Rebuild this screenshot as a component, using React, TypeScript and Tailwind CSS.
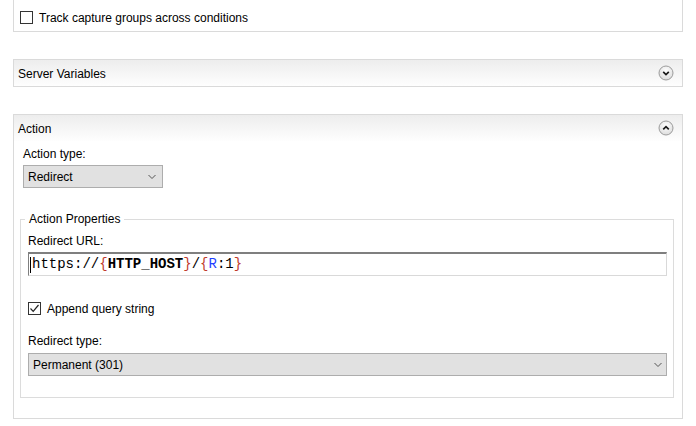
import React from 'react';

const font = { fontFamily: '"Liberation Sans", Arial, sans-serif' };

function Checkbox({ checked }: { checked?: boolean }) {
    return (
        <span className="flex items-center justify-center w-[13px] h-[13px] border border-[#333333] bg-white shrink-0">
            {checked && (
                <svg width="11" height="11" viewBox="0 0 11 11">
                    <path d="M1.5 5.5 L4.2 8.3 L9.5 2" fill="none" stroke="#222" strokeWidth="1.2" />
                </svg>
            )}
        </span>
    );
}

function Chevron() {
    return (
        <svg width="10" height="6" viewBox="0 0 10 6">
            <path d="M1.5 1 L5 4.5 L8.5 1" fill="none" stroke="#555" strokeWidth="1" />
        </svg>
    );
}

function CircleToggle({ up }: { up?: boolean }) {
    return (
        <svg width="16" height="16" viewBox="0 0 16 16">
            <defs>
                <radialGradient id={up ? 'gu' : 'gd'} cx="50%" cy="35%" r="65%">
                    <stop offset="0%" stopColor="#ffffff" />
                    <stop offset="100%" stopColor="#dcdcdc" />
                </radialGradient>
            </defs>
            <circle cx="8" cy="8" r="7" fill={`url(#${up ? 'gu' : 'gd'})`} stroke="#9c9c9c" strokeWidth="1" />
            {up ? (
                <path d="M5.2 9.4 L8 6.6 L10.8 9.4" fill="none" stroke="#1a1a1a" strokeWidth="1.7" />
            ) : (
                <path d="M5.2 6.8 L8 9.6 L10.8 6.8" fill="none" stroke="#1a1a1a" strokeWidth="1.7" />
            )}
        </svg>
    );
}

function PanelHeader({ title, up }: { title: string; up?: boolean }) {
    return (
        <div className="flex items-center justify-between h-[26px] pl-[4px] pr-[8px] bg-gradient-to-b from-[#ededed] to-[#fefefe]">
            <span className="text-[12px] text-black pt-[2px]">{title}</span>
            <CircleToggle up={up} />
        </div>
    );
}

export default function App() {
    return (
        <div className="bg-white w-[696px] h-[426px] overflow-hidden text-[12px] text-black" style={font}>
            <div className="ml-[13px] w-[670px]">
                {/* options panel, top cut off */}
                <div className="border-x border-b border-[#dadada] pt-[11px] pb-[7px] pl-[6px]">
                    <label className="flex items-center gap-[6px] h-[13px]">
                        <Checkbox />
                        <span className="leading-[15px] pt-[1px]">Track capture groups across conditions</span>
                    </label>
                </div>

                <div className="mt-[27px] border border-[#dadada]">
                    <PanelHeader title="Server Variables" />
                </div>

                <div className="mt-[27px] border border-[#dadada] h-[305px]">
                    <PanelHeader title="Action" up />
                    <div className="pl-[9px] pr-[8px]">
                        <div className="mt-[6px] leading-[15px]">Action type:</div>
                        <div className="mt-[3px] w-[140px] h-[23px] bg-[#e1e1e1] border border-[#adadad] flex items-center justify-between pl-[4px] pr-[5px]">
                            <span>Redirect</span>
                            <Chevron />
                        </div>

                        <fieldset className="mt-[24px] ml-[-3px] border border-[#dcdcdc] pl-[7px] pr-[6px] pb-[21px]">
                            <legend className="ml-[-3px] px-[4px] leading-[15px]">Action Properties</legend>
                            <div className="mt-[7px] leading-[15px]">Redirect URL:</div>
                            <div
                                className="mt-[3px] h-[24px] flex items-center pl-[1px] bg-white border-t-2 border-l border-t-[#7f7f7f] border-l-[#7f7f7f] border-r border-b border-r-[#d9d9d9] border-b-[#d9d9d9] text-[14px]"
                                style={{ fontFamily: '"Liberation Mono", "Courier New", monospace' }}
                            >
                                <span className="w-px h-[16px] bg-black mr-[1px]" />
                                <span>https://</span>
                                <span className="text-[#c0392b]">{'{'}</span>
                                <span className="font-bold">HTTP_HOST</span>
                                <span className="text-[#c0392b]">{'}'}</span>
                                <span>/</span>
                                <span className="text-[#c0392b]">{'{'}</span>
                                <span className="text-[#1f3fff]">R</span>
                                <span>:1</span>
                                <span className="text-[#c0392b]">{'}'}</span>
                            </div>

                            <label className="mt-[26px] flex items-center gap-[6px] h-[13px]">
                                <Checkbox checked />
                                <span className="leading-[15px] pt-[1px]">Append query string</span>
                            </label>

                            <div className="mt-[19px] leading-[15px]">Redirect type:</div>
                            <div className="mt-[4px] h-[23px] bg-[#e1e1e1] border border-[#adadad] flex items-center justify-between pl-[4px] pr-[3px]">
                                <span>Permanent (301)</span>
                                <Chevron />
                            </div>
                        </fieldset>
                    </div>
                </div>
            </div>
        </div>
    );
}
